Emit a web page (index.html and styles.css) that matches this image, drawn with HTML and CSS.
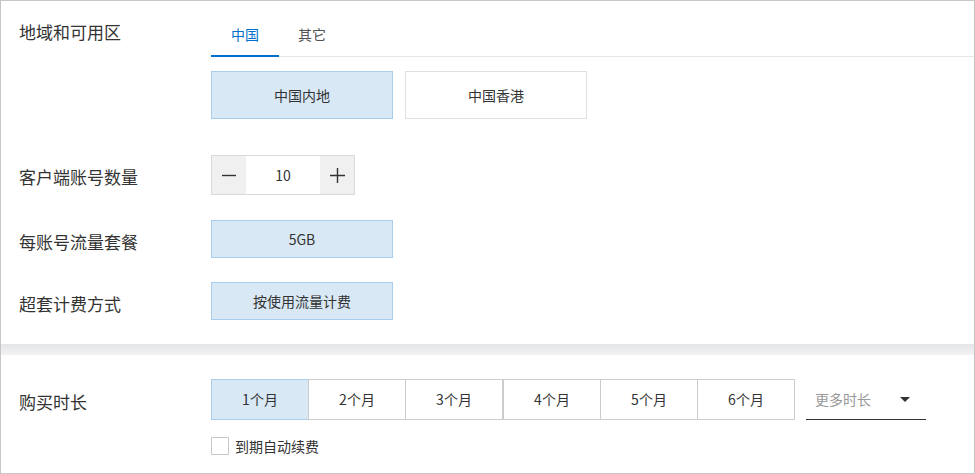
FILE: index.html
```html
<!DOCTYPE html>
<html lang="zh-CN">
<head>
<meta charset="utf-8">
<title>购买</title>
<link rel="stylesheet" href="styles.css">
</head>
<body>
<div class="page">
  <section class="card card-top">
    <div class="row">
      <div class="label label-region">地域和可用区</div>
      <div class="ctrl">
        <div class="tabs">
          <div class="tab active">中国</div>
          <div class="tab">其它</div>
        </div>
        <div class="options">
          <div class="opt opt-big selected">中国内地</div>
          <div class="opt opt-big">中国香港</div>
        </div>
      </div>
    </div>
    <div class="row row-count">
      <div class="label">客户端账号数量</div>
      <div class="ctrl">
        <div class="stepper">
          <div class="step-btn">
            <svg width="14" height="14" viewBox="0 0 14 14"><path d="M0 7.5H14" stroke="#333" stroke-width="1.4" fill="none"/></svg>
          </div>
          <div class="step-val">10</div>
          <div class="step-btn">
            <svg width="15" height="15" viewBox="0 0 15 15"><path d="M0 7.5H15M7.5 0V15" stroke="#333" stroke-width="1.4" fill="none"/></svg>
          </div>
        </div>
      </div>
    </div>
    <div class="row row-pack">
      <div class="label">每账号流量套餐</div>
      <div class="ctrl">
        <div class="opt opt-small selected">5GB</div>
      </div>
    </div>
    <div class="row row-bill">
      <div class="label">超套计费方式</div>
      <div class="ctrl">
        <div class="opt opt-small selected">按使用流量计费</div>
      </div>
    </div>
  </section>
  <div class="band"></div>
  <section class="card card-bottom">
    <div class="row">
      <div class="label label-month">购买时长</div>
      <div class="ctrl">
        <div class="months">
          <div class="mgroup">
            <div class="month selected">1个月</div>
            <div class="month">2个月</div>
            <div class="month">3个月</div>
          </div>
          <div class="mgroup">
            <div class="month">4个月</div>
            <div class="month">5个月</div>
            <div class="month">6个月</div>
          </div>
          <div class="more">
            <span class="more-text">更多时长</span>
            <span class="caret"></span>
          </div>
        </div>
        <label class="renew">
          <span class="checkbox"></span>
          <span class="renew-text">到期自动续费</span>
        </label>
      </div>
    </div>
  </section>
</div>
</body>
</html>
```
FILE: styles.css
```css
html, body {
  margin: 0;
  padding: 0;
  background: #fff;
}

body {
  font-family: "Noto Sans CJK SC", "Noto Sans", sans-serif;
  color: #333;
}

.page {
  width: 975px;
  height: 474px;
  box-sizing: border-box;
  border: 1px solid #c6c6c6;
  display: flex;
  flex-direction: column;
}

.card,
.band {
  flex-shrink: 0;
}

.card-top {
  padding: 10px 0 24px;
}

.card-bottom {
  padding: 24px 0 17px;
}

.row {
  display: grid;
  grid-template-columns: 192px 1fr;
  align-items: start;
  padding-left: 18px;
}

.row-count {
  margin-top: 36px;
}

.row-pack {
  margin-top: 25px;
}

.row-bill {
  margin-top: 24px;
}

.label {
  font-size: 17px;
  line-height: 30px;
  padding-top: 7px;
  color: #333;
  white-space: nowrap;
}

.label-region {
  padding-top: 6px;
}

.label-month {
  padding-top: 8px;
}

.ctrl {
  display: flex;
  flex-direction: column;
  align-items: flex-start;
}

/* tabs */
.tabs {
  align-self: stretch;
  display: flex;
  height: 46px;
  box-sizing: border-box;
  border-bottom: 1px solid #e6e6e6;
}

.tab {
  height: 46px;
  margin-bottom: -1px;
  line-height: 46px;
  padding: 0 20px;
  font-size: 14px;
  color: #555;
  box-sizing: border-box;
}

.tab + .tab {
  padding: 0 19px;
}

.tab.active {
  color: #0070cc;
  box-shadow: inset 0 -2px 0 #0070cc;
}

/* option buttons */
.options {
  display: flex;
  gap: 12px;
  margin-top: 14px;
}

.opt {
  box-sizing: border-box;
  width: 182px;
  border: 1px solid #e0e0e0;
  background: #fff;
  font-size: 14px;
  text-align: center;
  color: #333;
}

.opt-big {
  height: 48px;
  line-height: 46px;
}

.opt-small {
  height: 38px;
  line-height: 36px;
}

.opt.selected,
.month.selected {
  background: #d8e8f5;
  border-color: #a9cdec;
}

/* stepper */
.stepper {
  display: flex;
  width: 144px;
  height: 40px;
  box-sizing: border-box;
  border: 1px solid #d9d9d9;
}

.step-btn {
  width: 34px;
  background: #f0f0f0;
  display: flex;
  align-items: center;
  justify-content: center;
}

.step-btn svg {
  display: block;
}

.step-val {
  flex: 1;
  text-align: center;
  font-size: 14px;
  line-height: 38px;
  color: #333;
}

/* band */
.band {
  height: 11px;
  background: linear-gradient(#e4e5e7, #f2f2f3);
}

/* months */
.months {
  display: flex;
  align-items: flex-start;
}

.mgroup {
  display: flex;
}

.month {
  box-sizing: border-box;
  width: 98px;
  height: 41px;
  line-height: 39px;
  border: 1px solid #cccccc;
  font-size: 14px;
  text-align: center;
  color: #333;
  background: #fff;
}

.month + .month {
  margin-left: -1px;
}

.more {
  margin-left: 11px;
  width: 120px;
  height: 41px;
  box-sizing: border-box;
  border-bottom: 1px solid #333;
  display: flex;
  align-items: center;
  justify-content: space-between;
  padding: 0 16px 0 9px;
}

.more-text {
  font-size: 14px;
  color: #999;
  line-height: 40px;
}

.caret {
  width: 0;
  height: 0;
  border-left: 5px solid transparent;
  border-right: 5px solid transparent;
  border-top: 5px solid #333;
  margin-top: 1px;
}

/* renew */
.renew {
  display: flex;
  align-items: center;
  margin-top: 17px;
}

.checkbox {
  width: 18px;
  height: 18px;
  box-sizing: border-box;
  border: 1px solid #c8c8c8;
  background: #fff;
}

.renew-text {
  margin-left: 6px;
  font-size: 14px;
  line-height: 18px;
  color: #333;
}
```
